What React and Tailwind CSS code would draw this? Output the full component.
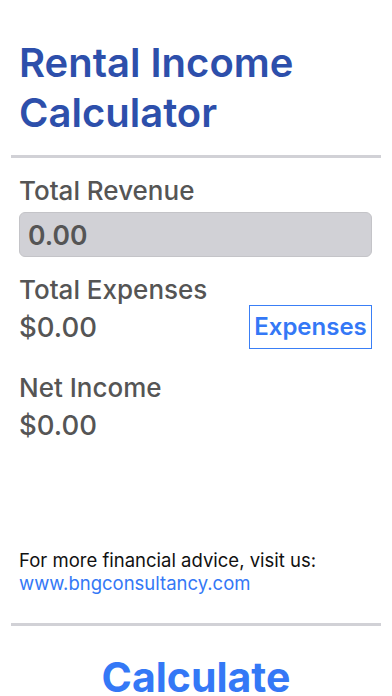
export default function App() {
  const font = { fontFamily: 'Inter, "Liberation Sans", Arial, sans-serif' };
  return (
    <div className="w-[392px] h-[696px] overflow-hidden bg-white" style={font}>
      <div className="px-[19px] pt-[38px]">
        <h1 className="text-[40px] leading-[50px] font-semibold text-[#2d4fab]">
          Rental Income
          <br />
          Calculator
        </h1>
      </div>
      <div className="mx-[11px] mt-[17px] h-[3px] bg-[#d1d1d6]" />
      <div className="pl-[19px] pr-[20px] pt-[18px]">
        <div className="text-[26px] leading-[30px] font-medium text-[#555555]">Total Revenue</div>
        <div className="mt-[6px] h-[45px] rounded-[6px] bg-[#d1d1d6] border border-[#c4c4c8] pl-[8px] flex items-center">
          <span className="text-[26.5px] leading-[34px] font-semibold text-[#555555]">0.00</span>
        </div>
        <div className="mt-[18px] text-[26px] leading-[30px] font-medium text-[#555555]">Total Expenses</div>
        <div className="flex items-center justify-between">
          <span className="text-[27.5px] leading-[34px] font-medium text-[#555555]">$0.00</span>
          <button className="h-[44px] w-[123px] border-[1.5px] border-[#3a7ff6] flex items-center justify-center text-[24px] leading-[28px] font-semibold text-[#3478f6]">
            Expenses
          </button>
        </div>
        <div className="mt-[24px] text-[26px] leading-[30px] font-medium text-[#555555]">Net Income</div>
        <div className="mt-[5px] text-[27.5px] leading-[34px] font-medium text-[#555555]">$0.00</div>
        <div className="mt-[107px] text-[18.5px] leading-[23px] text-[#111111]">
          For more financial advice, visit us:
        </div>
        <div className="text-[18.5px] leading-[23px] text-[#3478f6]">www.bngconsultancy.com</div>
      </div>
      <div className="mx-[11px] mt-[28px] h-[3px] bg-[#d1d1d6]" />
      <div className="mt-[26px] text-center text-[41px] leading-[50px] font-bold text-[#3478f6]">
        Calculate
      </div>
    </div>
  );
}
